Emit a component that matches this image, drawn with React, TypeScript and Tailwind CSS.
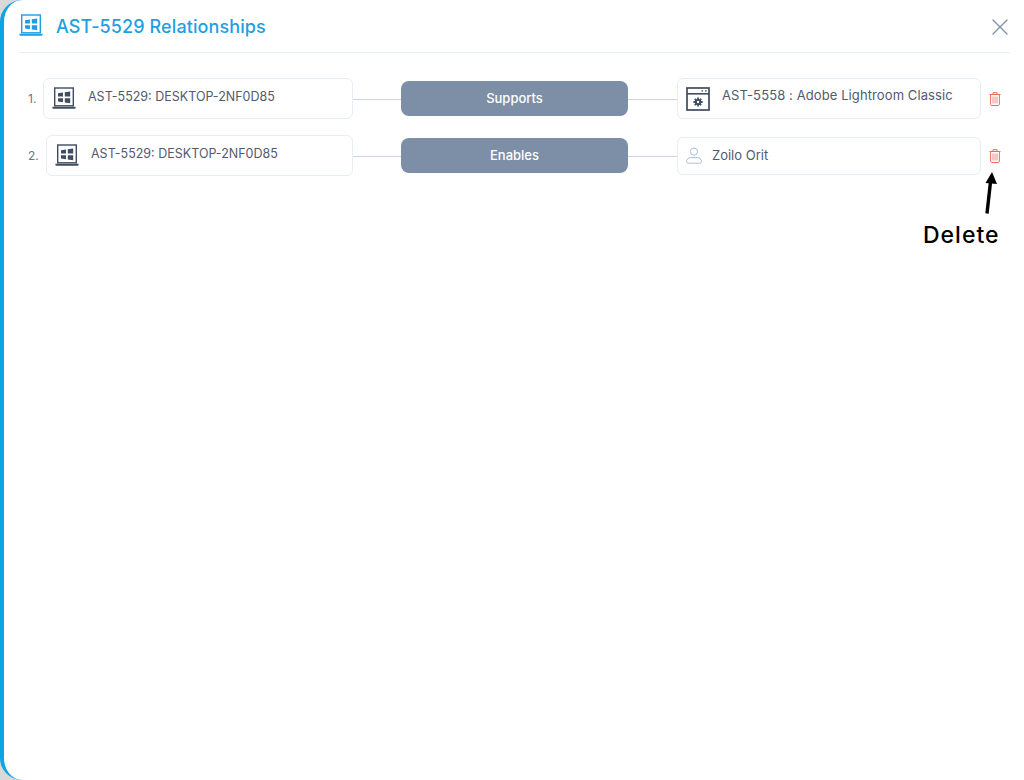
import React from 'react';
import { X } from 'lucide-react';

function LaptopIcon({ className }: { className: string }) {
  return (
    <svg viewBox="0 0 24 24" className={className} fill="none">
      <rect x="2.7" y="1" width="18.6" height="17.8" stroke="currentColor" strokeWidth="1.4" />
      <path d="M0.4 19.8h23.2v.9a1 1 0 0 1-1 1H1.4a1 1 0 0 1-1-1z" fill="currentColor" />
      <path d="M6 6.2l5-.7v4H6zM12.8 5.2l5.4-.7v5h-5.4zM6 11.2h5v4l-5-.6zM12.8 11.2h5.4v5l-5.4-.7z" fill="currentColor" />
    </svg>
  );
}

function AppIcon({ className }: { className: string }) {
  return (
    <svg viewBox="0 0 24 24" className={className} fill="none">
      <rect x="1" y="1" width="22" height="22" stroke="currentColor" strokeWidth="1.7" />
      <path d="M1 6.8h22" stroke="currentColor" strokeWidth="1.6" />
      <path d="M15.5 3.9h1.6M19 3.9h1.6" stroke="currentColor" strokeWidth="1.2" />
      <circle cx="12" cy="15" r="3.1" fill="currentColor" />
      <path d="M12 10.4v9.2M7.4 15h9.2M8.8 11.8l6.4 6.4M8.8 18.2l6.4-6.4" stroke="currentColor" strokeWidth="1.8" />
      <circle cx="12" cy="15" r="1.2" fill="white" />
    </svg>
  );
}

function PersonIcon({ className }: { className: string }) {
  return (
    <svg viewBox="0 0 16 17" className={className} fill="none" stroke="currentColor" strokeWidth="1">
      <circle cx="8" cy="4.6" r="3.6" />
      <path d="M4.6 10.6h6.8a4 4 0 0 1 4 3v1a1.6 1.6 0 0 1-1.6 1.6H2.2A1.6 1.6 0 0 1 .6 14.6v-1a4 4 0 0 1 4-3z" />
    </svg>
  );
}

function TrashIcon() {
  return (
    <svg viewBox="0 0 12 14" className="w-3 h-3.5 text-[#ee6b62]" fill="none" stroke="currentColor">
      <path d="M0.5 2.5h11M4 2.3V.7h4v1.6" strokeWidth="1" />
      <path d="M1.6 2.7v9.6a1.2 1.2 0 0 0 1.2 1.2h6.4a1.2 1.2 0 0 0 1.2-1.2V2.7" strokeWidth="1" />
      <path d="M4 4.5v7M6 4.5v7M8 4.5v7" strokeWidth="1.1" opacity="0.7" />
    </svg>
  );
}

function Connector() {
  return <div className="w-12 h-px mt-0.5 bg-[#c8d5e5]" />;
}

export default function App() {
  return (
    <div className="h-[780px] bg-[#d9d9d9] overflow-hidden font-['Inter','Noto_Sans',sans-serif]">
      <div className="h-full bg-white border-l-4 border-[#0aa5e3] rounded-l-[22px] pr-3.5 pl-[15px]">
        <header className="h-[53px] flex items-center border-b border-[#e9eef3]">
          <LaptopIcon className="w-6 h-6 text-[#1f9fe0] mr-[13px]" />
          <h1 className="text-[18px] font-medium text-[#1f9fe0] tracking-[0.1px]">AST-5529 Relationships</h1>
          <X className="w-7 h-7 text-[#7e93ab] ml-auto -mr-1 mt-0.5" strokeWidth={1.2} />
        </header>

        <div className="pt-[25px] text-[13px] text-[#525a6e]">
          <div className="flex items-center">
            <span className="w-6 pl-[9px] text-[12px] text-[#6b7686] shrink-0">1.</span>
            <div className="w-[310px] h-[41px] flex items-center border border-[#e8edf3] rounded-md pl-2">
              <LaptopIcon className="w-6 h-6 text-[#3f4c61] shrink-0" />
              <span className="ml-3 mb-[3px] text-[12.5px]">AST-5529: DESKTOP-2NF0D85</span>
            </div>
            <Connector />
            <div className="w-[227px] h-[35px] flex items-center justify-center rounded-lg bg-[#7c8fa6] text-white text-[13px] font-medium">Supports</div>
            <div className="w-[49px] h-px mt-0.5 bg-[#c8d5e5]" />
            <div className="w-[304px] h-[41px] flex items-center border border-[#e8edf3] rounded-md pl-2">
              <AppIcon className="w-6 h-6 text-[#3f4c61] shrink-0" />
              <span className="ml-3 mb-[5px] tracking-[0.1px]">AST-5558 : Adobe Lightroom Classic</span>
            </div>
            <div className="ml-2 mt-px"><TrashIcon /></div>
          </div>

          <div className="flex items-center mt-4">
            <span className="w-[27px] pl-[9px] text-[12px] text-[#6b7686] shrink-0">2.</span>
            <div className="w-[307px] h-[41px] flex items-center border border-[#e8edf3] rounded-md pl-2">
              <LaptopIcon className="w-6 h-6 text-[#3f4c61] shrink-0" />
              <span className="ml-3 mb-[3px] text-[12.5px]">AST-5529: DESKTOP-2NF0D85</span>
            </div>
            <Connector />
            <div className="w-[227px] h-[35px] flex items-center justify-center rounded-lg bg-[#7c8fa6] text-white text-[13px] font-medium">Enables</div>
            <div className="w-[49px] h-px mt-0.5 bg-[#c8d5e5]" />
            <div className="w-[304px] h-[38px] flex items-center border border-[#e8edf3] rounded-md pl-2">
              <PersonIcon className="w-4 h-[17px] text-[#a9c0da] shrink-0" />
              <span className="ml-2.5">Zoilo Orit</span>
            </div>
            <div className="ml-2 mt-px relative">
              <TrashIcon />
              {/* annotation added on top of the screenshot */}
              <svg viewBox="0 0 14 42" className="absolute top-[23px] left-[-5px] w-3.5 h-[42px] text-black" fill="none">
                <path d="M3 41.5L6.6 9" stroke="currentColor" strokeWidth="3.4" />
                <path d="M8 0L13 12L1.5 11z" fill="currentColor" />
              </svg>
              <span className="absolute top-[75px] left-[-66px] text-[23px] leading-none font-medium tracking-[1px] text-black">Delete</span>
            </div>
          </div>
        </div>
      </div>
    </div>
  );
}
